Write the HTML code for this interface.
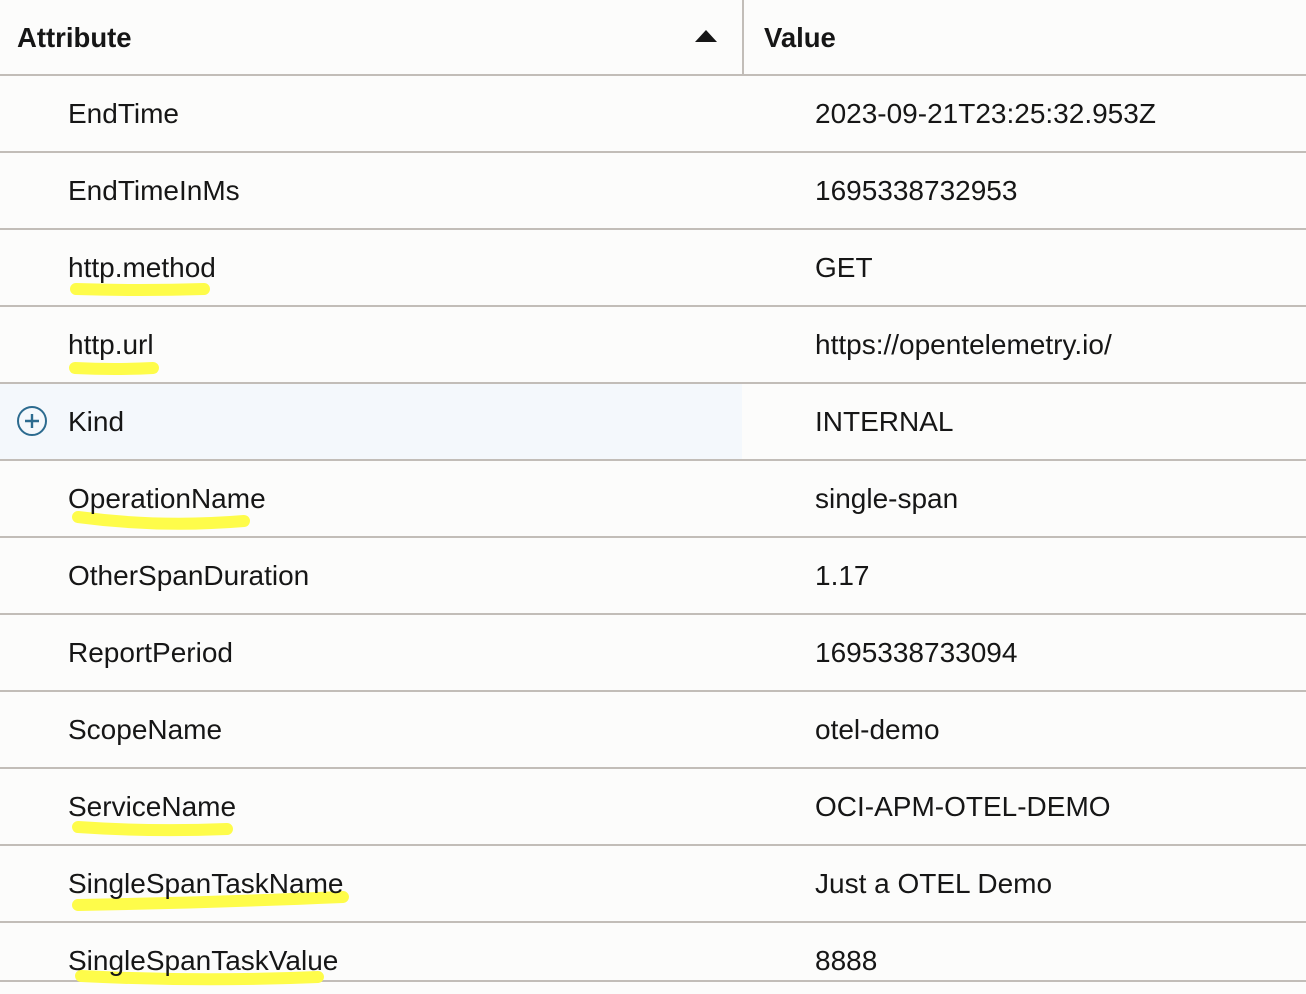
<!DOCTYPE html>
<html><head><meta charset="utf-8"><style>
html,body{margin:0;padding:0;width:1306px;height:994px;overflow:hidden;background:#fcfcfb;font-family:"Liberation Sans",Arial,sans-serif;color:#161616}
.l{position:absolute;left:0;width:1306px;height:2px;background:#c2bdb8}
.t{position:absolute;font-size:28px;line-height:30px;white-space:nowrap}
.h{font-weight:bold;font-size:27.5px}
</style></head><body>
<div style="position:absolute;left:0;top:383px;width:742px;height:76px;background:#f4f8fc"></div>
<div style="position:absolute;left:742px;top:0;width:2px;height:75px;background:#c2bdb8"></div>
<div style="position:absolute;left:695px;top:30px;width:0;height:0;border-left:11px solid transparent;border-right:11px solid transparent;border-bottom:12px solid #161616"></div>
<div class="l" style="top:74px"></div>
<div class="l" style="top:151px"></div>
<div class="l" style="top:228px"></div>
<div class="l" style="top:305px"></div>
<div class="l" style="top:382px"></div>
<div class="l" style="top:459px"></div>
<div class="l" style="top:536px"></div>
<div class="l" style="top:613px"></div>
<div class="l" style="top:690px"></div>
<div class="l" style="top:767px"></div>
<div class="l" style="top:844px"></div>
<div class="l" style="top:921px"></div>
<div class="l" style="top:980px"></div>
<svg style="position:absolute;left:0;top:0" width="1306" height="994">
<g stroke="#fefc4a" stroke-linecap="round" fill="none" stroke-width="12">
<path d="M76 289 Q140 291 204 289"/>
<path d="M75 368 Q115 370 153 368"/>
<path d="M78 517 Q160 528 244 521"/>
<path d="M78 827 Q150 832 227 829"/>
<path d="M78 905 Q200 903 343 897"/>
<path d="M81 976 Q200 982 318 977"/>
</g>
<circle cx="32" cy="421" r="14" stroke="#2c6b8f" stroke-width="2" fill="none"/>
<path d="M25 421 H39 M32 414 V428" stroke="#2c6b8f" stroke-width="2.4"/>
</svg>
<div class="t h" style="left:17px;top:23px">Attribute</div>
<div class="t h" style="left:764px;top:23px">Value</div>
<div class="t" style="left:68px;top:99px">EndTime</div><div class="t" style="left:815px;top:99px">2023-09-21T23:25:32.953Z</div>
<div class="t" style="left:68px;top:176px">EndTimeInMs</div><div class="t" style="left:815px;top:176px">1695338732953</div>
<div class="t" style="left:68px;top:253px">http.method</div><div class="t" style="left:815px;top:253px">GET</div>
<div class="t" style="left:68px;top:330px">http.url</div><div class="t" style="left:815px;top:330px">https://opentelemetry.io/</div>
<div class="t" style="left:68px;top:407px">Kind</div><div class="t" style="left:815px;top:407px">INTERNAL</div>
<div class="t" style="left:68px;top:484px">OperationName</div><div class="t" style="left:815px;top:484px">single-span</div>
<div class="t" style="left:68px;top:561px">OtherSpanDuration</div><div class="t" style="left:815px;top:561px">1.17</div>
<div class="t" style="left:68px;top:638px">ReportPeriod</div><div class="t" style="left:815px;top:638px">1695338733094</div>
<div class="t" style="left:68px;top:715px">ScopeName</div><div class="t" style="left:815px;top:715px">otel-demo</div>
<div class="t" style="left:68px;top:792px">ServiceName</div><div class="t" style="left:815px;top:792px">OCI-APM-OTEL-DEMO</div>
<div class="t" style="left:68px;top:869px">SingleSpanTaskName</div><div class="t" style="left:815px;top:869px">Just a OTEL Demo</div>
<div class="t" style="left:68px;top:946px">SingleSpanTaskValue</div><div class="t" style="left:815px;top:946px">8888</div>
</body></html>
